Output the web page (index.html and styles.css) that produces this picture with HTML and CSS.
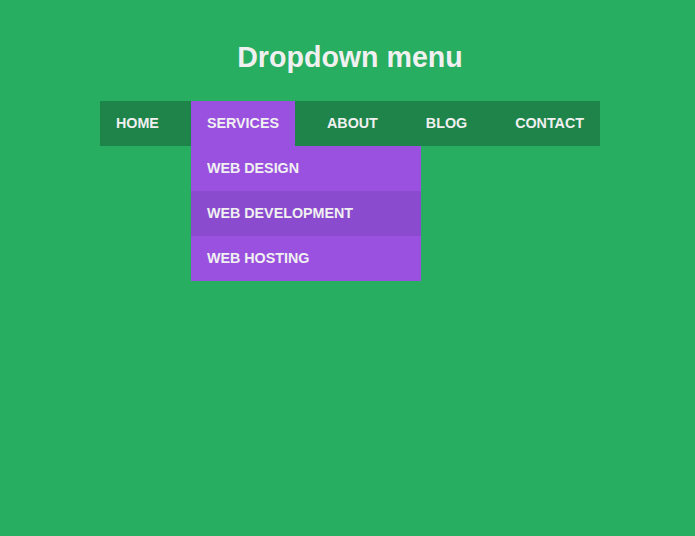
FILE: index.html
```html
<!DOCTYPE html>
<html>
<head>
<meta charset="utf-8">
<link rel="stylesheet" href="styles.css">
</head>
<body>
<div class="page">
<h1 class="title">Dropdown menu</h1>
<nav class="nav">
  <ul class="menu">
    <li class="item"><a class="link">HOME</a></li>
    <li class="item item-open"><a class="link">SERVICES</a>
      <ul class="sub">
        <li><a class="sublink">WEB DESIGN</a></li>
        <li><a class="sublink sublink-hover">WEB DEVELOPMENT</a></li>
        <li><a class="sublink">WEB HOSTING</a></li>
      </ul>
    </li>
    <li class="item"><a class="link">ABOUT</a></li>
    <li class="item"><a class="link">BLOG</a></li>
    <li class="item"><a class="link">CONTACT</a></li>
  </ul>
</nav>
</div>
</body>
</html>
```
FILE: styles.css
```css
html, body {
  margin: 0;
  padding: 0;
  overflow: hidden;
}
body {
  background: #27ae60;
  height: 536px;
  font-family: "Liberation Sans", Arial, sans-serif;
}
.page {
  width: 700px;
}
.title {
  margin: 0;
  box-sizing: border-box;
  height: 101px;
  padding-top: 39px;
  text-align: center;
  color: #f0f0f0;
  font-size: 28.6px;
  font-weight: bold;
  line-height: 36px;
}
.nav {
  width: 500px;
  margin: 0 auto;
}
.menu {
  list-style: none;
  margin: 0;
  padding: 0;
  display: flex;
  justify-content: space-between;
  background: #1e8449;
  height: 45px;
}
.item {
  position: relative;
}
.link {
  display: block;
  padding: 0 16px;
  line-height: 45px;
  color: #f0f0f0;
  font-size: 14.3px;
  font-weight: bold;
  white-space: nowrap;
}
.item-open .link {
  background: #9b51e0;
}
.sub {
  position: absolute;
  top: 45px;
  left: 0;
  width: 230px;
  list-style: none;
  margin: 0;
  padding: 0;
  background: #9b51e0;
}
.sublink {
  display: block;
  padding: 0 16px;
  line-height: 45px;
  color: #f0f0f0;
  font-size: 14.3px;
  font-weight: bold;
  white-space: nowrap;
}
.sublink-hover {
  background: #8a4bcf;
}
```
